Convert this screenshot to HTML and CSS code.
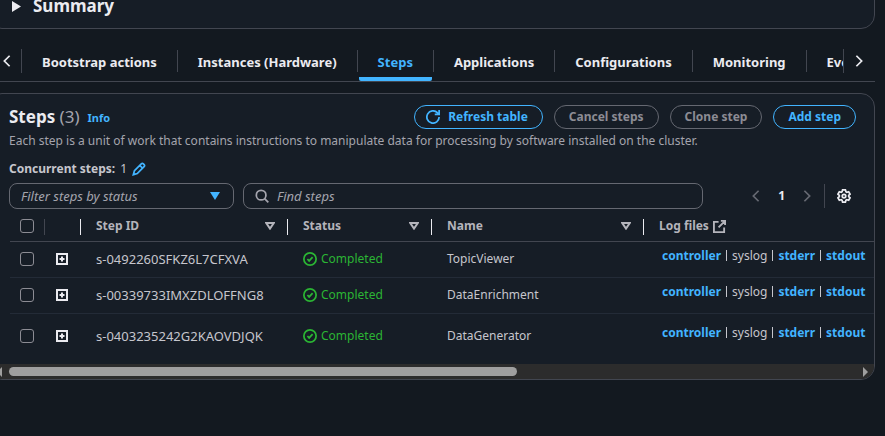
FILE: index.html
```html
<!DOCTYPE html>
<html lang="en">
<head>
<meta charset="utf-8">
<title>Cluster steps</title>
<link rel="stylesheet" href="styles.css">
</head>
<body>
<svg class="defs" width="0" height="0" aria-hidden="true">
  <symbol id="i-left" viewBox="0 0 16 16"><path d="M11 2 5 8l6 6"/></symbol>
  <symbol id="i-right" viewBox="0 0 16 16"><path d="M5 2l6 6-6 6"/></symbol>
  <symbol id="i-refresh" viewBox="0 0 16 16"><path d="M15 8a7 7 0 1 1-2-4.9L14.5 5M10 5h5V0"/></symbol>
  <symbol id="i-edit" viewBox="0 0 16 16"><path d="M1.5 14.5 2.8 10 10.6 2.2q1.2-1.2 2.4 0l.8.8q1.2 1.2 0 2.4L6 13.2zM9 4l3 3"/></symbol>
  <symbol id="i-search" viewBox="0 0 16 16"><circle cx="7" cy="7" r="5.500"/><path d="m11 11 4.200 4.200"/></symbol>
  <symbol id="i-gear" viewBox="0 0 16 16"><path d="M6.4 1h3.2l.6 2.1 1 .6 2.1-.6 1.6 2.8L13.400 7.400v1.200l1.500 1.500-1.600 2.800-2.100-.6-1 .6-.6 2.100H6.400l-.6-2.100-1-.6-2.100.6-1.600-2.800 1.500-1.500V7.400L1.100 5.900l1.600-2.800 2.100.6 1-.6z"/><circle cx="8" cy="8" r="2"/></symbol>
  <symbol id="i-expand" viewBox="0 0 12 12"><path d="M1 1h10v10H1zM6 3.500v5M3.500 6h5"/></symbol>
  <symbol id="i-ok" viewBox="0 0 16 16"><circle cx="8" cy="8" r="7"/><path d="m5 8 2 2.200L11 5.800"/></symbol>
  <symbol id="i-external" viewBox="0 0 14 14"><path d="M6 2H1v11h11V8M8.500 1H13v4.500M13 1 6 8"/></symbol>
  <symbol id="i-sort" viewBox="0 0 10 8"><path d="M1.200 1h7.600L5 6.600z"/></symbol>
</svg>

<main class="page">
  <details class="card summary">
    <summary><svg class="caret" viewBox="0 0 9 11"><path d="M0 0 9 5.500 0 11z"/></svg>Summary</summary>
  </details>

  <nav class="tabs" aria-label="Cluster details">
    <button class="tabs-arrow prev" aria-label="Scroll left"><svg class="icon chevron"><use href="#i-left"/></svg></button>
    <div class="tabs-list">
      <a class="tab" href="#bootstrap"><span>Bootstrap actions</span></a>
      <a class="tab" href="#instances"><span>Instances (Hardware)</span></a>
      <a class="tab active" href="#steps" aria-current="page"><span>Steps</span></a>
      <a class="tab" href="#applications"><span>Applications</span></a>
      <a class="tab" href="#configurations"><span>Configurations</span></a>
      <a class="tab" href="#monitoring"><span>Monitoring</span></a>
      <a class="tab" href="#events"><span>Events</span></a>
    </div>
    <button class="tabs-arrow next" aria-label="Scroll right"><svg class="icon chevron"><use href="#i-right"/></svg></button>
  </nav>

  <section class="card steps" id="steps">
    <header class="head">
      <h2>Steps <span class="count">(3)</span></h2>
      <a class="info" href="#info">Info</a>
      <div class="actions">
        <button class="btn"><svg class="icon refresh"><use href="#i-refresh"/></svg>Refresh table</button>
        <button class="btn" disabled>Cancel steps</button>
        <button class="btn" disabled>Clone step</button>
        <button class="btn">Add step</button>
      </div>
    </header>
    <p class="desc">Each step is a unit of work that contains instructions to manipulate data for processing by software installed on the cluster.</p>
    <p class="concurrent"><b>Concurrent steps:</b> 1 <button class="bare edit" aria-label="Edit concurrent steps"><svg class="icon"><use href="#i-edit"/></svg></button></p>

    <div class="filters">
      <div class="field status-filter">
        <select aria-label="Filter steps by status"><option>Filter steps by status</option></select>
        <svg class="drop" viewBox="0 0 10 8"><path d="M0 0h10L5 8z"/></svg>
      </div>
      <label class="field search"><svg class="icon"><use href="#i-search"/></svg><input type="search" placeholder="Find steps" aria-label="Find steps"></label>
      <div class="pager">
        <button class="bare" aria-label="Previous page" disabled><svg class="icon chevron"><use href="#i-left"/></svg></button>
        <b>1</b>
        <button class="bare" aria-label="Next page" disabled><svg class="icon chevron"><use href="#i-right"/></svg></button>
      </div>
      <button class="bare settings" aria-label="Preferences"><svg class="icon"><use href="#i-gear"/></svg></button>
    </div>

    <table>
      <colgroup><col class="c-check"><col class="c-expand"><col class="c-id"><col class="c-status"><col class="c-name"><col></colgroup>
      <thead>
        <tr>
          <th class="dim"><input type="checkbox" aria-label="Select all steps"></th>
          <th></th>
          <th><div class="th">Step ID<svg class="sort"><use href="#i-sort"/></svg></div></th>
          <th><div class="th">Status<svg class="sort"><use href="#i-sort"/></svg></div></th>
          <th><div class="th">Name<svg class="sort"><use href="#i-sort"/></svg></div></th>
          <th><div class="th logs">Log files<svg class="external"><use href="#i-external"/></svg></div></th>
        </tr>
      </thead>
      <tbody>
        <tr>
          <td><input type="checkbox" aria-label="Select TopicViewer"></td>
          <td><button class="bare" aria-label="Expand TopicViewer"><svg class="expand"><use href="#i-expand"/></svg></button></td>
          <td class="id">s-0492260SFKZ6L7CFXVA</td>
          <td><span class="ok"><svg class="icon"><use href="#i-ok"/></svg>Completed</span></td>
          <td>TopicViewer</td>
          <td><div class="links"><a href="#controller">controller</a><span>syslog</span><a href="#stderr">stderr</a><a href="#stdout">stdout</a></div></td>
        </tr>
        <tr>
          <td><input type="checkbox" aria-label="Select DataEnrichment"></td>
          <td><button class="bare" aria-label="Expand DataEnrichment"><svg class="expand"><use href="#i-expand"/></svg></button></td>
          <td class="id">s-00339733IMXZDLOFFNG8</td>
          <td><span class="ok"><svg class="icon"><use href="#i-ok"/></svg>Completed</span></td>
          <td>DataEnrichment</td>
          <td><div class="links"><a href="#controller">controller</a><span>syslog</span><a href="#stderr">stderr</a><a href="#stdout">stdout</a></div></td>
        </tr>
        <tr>
          <td><input type="checkbox" aria-label="Select DataGenerator"></td>
          <td><button class="bare" aria-label="Expand DataGenerator"><svg class="expand"><use href="#i-expand"/></svg></button></td>
          <td class="id">s-0403235242G2KAOVDJQK</td>
          <td><span class="ok"><svg class="icon"><use href="#i-ok"/></svg>Completed</span></td>
          <td>DataGenerator</td>
          <td><div class="links"><a href="#controller">controller</a><span>syslog</span><a href="#stderr">stderr</a><a href="#stdout">stdout</a></div></td>
        </tr>
      </tbody>
    </table>
    <div class="scrollbar">
      <svg class="bar-arrow" viewBox="0 0 5 10"><path d="M5 0v10L0 5z"/></svg>
      <div class="track"><div class="thumb"></div></div>
      <svg class="bar-arrow" viewBox="0 0 5 10"><path d="M0 0v10l5-5z"/></svg>
    </div>
  </section>
</main>
</body>
</html>
```
FILE: styles.css
```css
* { box-sizing: border-box; }

:root {
  --page: #131920;
  --card: #161d26;
  --line: #424650;
  --field: #656871;
  --text: #c6c6cd;
  --bright: #ebebf0;
  --muted: #a4a4ad;
  --link: #42b4ff;
}

body {
  margin: 0;
  overflow: hidden;
  background: var(--page);
  color: var(--text);
  font: 12px/18px "Noto Sans", sans-serif;
}

h2, p { margin: 0; }
a { color: var(--link); font-weight: 700; text-decoration: none; }
button, input, select { font: inherit; color: inherit; }
svg { display: block; flex: none; fill: none; stroke: currentColor; }

.defs { position: absolute; }
.icon { width: 14px; height: 14px; stroke-width: 2; }
.chevron { width: 14px; height: 14px; }
.page { margin: 0 10px 0 -12px; }

.card {
  background: var(--card);
  border: 1px solid var(--line);
  border-radius: 14px;
}

.summary { margin-top: -22px; padding: 15px 23px 10px; }
.summary summary {
  display: flex;
  align-items: center;
  gap: 12px;
  list-style: none;
  color: var(--bright);
  font-size: 17px;
  line-height: 24px;
  font-weight: 700;
}
.caret { width: 9px; height: 11px; fill: currentColor; stroke: none; }

.tabs {
  display: flex;
  margin-top: 12px;
  padding-left: 12px;
  border-bottom: 1px solid var(--line);
  color: var(--bright);
}
.tabs-arrow {
  flex: none;
  height: 24px;
  margin: 8px 0;
  padding: 0;
  border: 0 solid var(--line);
  background: none;
}
.prev { width: 22px; border-right-width: 1px; }
.next { width: 32px; padding-left: 8px; border-left-width: 1px; }
.tabs-list { display: flex; flex: 1; min-width: 0; overflow: hidden; }
.tab {
  display: flex;
  flex: none;
  align-items: center;
  color: inherit;
  font-size: 13px;
  line-height: 22px;
}
.tab span { margin: 0 1px; padding: 9px 19px 4px; border-bottom: 4px solid transparent; border-radius: 2px; }
.tab + .tab::before { content: ""; height: 22px; border-left: 1px solid var(--line); }
.tab.active { color: var(--link); }
.tab.active span { background: linear-gradient(var(--link), var(--link)) bottom / 100% 4px no-repeat border-box; }

.steps { margin-top: 11px; overflow: hidden; }
.head, .desc, .concurrent, .filters { margin-left: 20px; }
.head { display: flex; align-items: center; margin-top: 11px; margin-right: 18px; }
h2 { color: var(--bright); font-size: 17px; line-height: 24px; }
.count { color: var(--muted); font-weight: 400; }
.info { margin: 2px 0 0 8px; font-size: 11px; }
.actions { display: flex; gap: 11px; margin-left: auto; }
.btn {
  display: flex;
  align-items: center;
  gap: 8px;
  height: 24px;
  padding: 0 14px;
  border: 1px solid var(--link);
  border-radius: 12px;
  background: none;
  color: var(--link);
  font-weight: 700;
}
.btn:disabled { border-color: var(--field); color: #8c8c94; }
.refresh { margin-left: -3px; }
.desc { margin-top: 3px; color: var(--muted); }
.concurrent { display: flex; align-items: center; gap: 5px; margin-top: 10px; }

.bare { display: block; padding: 0; border: 0; background: none; }
.edit { color: var(--link); }
.bare:disabled { color: var(--field); }

.filters { display: flex; align-items: center; margin-top: 5px; margin-right: 23px; }
.field {
  display: flex;
  align-items: center;
  height: 26px;
  border: 1px solid var(--field);
  border-radius: 8px;
  color: var(--muted);
  font-size: 13px;
  font-style: italic;
}
.status-filter { flex: 0 0 225px; padding-right: 13px; }
.status-filter select {
  flex: 1;
  padding: 0 0 0 11px;
  border: 0;
  outline: 0;
  appearance: none;
  background: none;
}
.drop { width: 10px; height: 8px; fill: var(--link); stroke: none; }
.search { flex: 0 1 460px; gap: 8px; margin-left: 9px; padding-left: 11px; }
.search input { flex: 1; min-width: 0; padding: 0; border: 0; outline: 0; background: none; }
.search input::placeholder { color: inherit; opacity: 1; }
.pager { display: flex; align-items: center; gap: 15px; margin-left: auto; color: var(--bright); }
.settings { margin-left: 10px; padding: 5px 0 5px 12px; border-left: 1px solid var(--line); color: var(--bright); }

table {
  width: calc(100% - 21px);
  margin-left: 21px;
  border-collapse: separate;
  border-spacing: 0;
  table-layout: fixed;
}
.c-check { width: 35px; }
.c-expand { width: 36px; }
.c-id { width: 207px; }
.c-status { width: 144px; }
.c-name { width: 212px; }
th {
  height: 33px;
  padding: 2px 0 0;
  border-bottom: 1px solid var(--line);
  background: linear-gradient(var(--bright), var(--bright)) right 10px / 1px 16px no-repeat;
  color: #b4b4bb;
  text-align: left;
}
th.dim { background-image: linear-gradient(var(--line), var(--line)); }
th:last-child { background: none; }
.th { display: flex; align-items: center; justify-content: space-between; padding: 0 13px 0 15px; }
.logs { justify-content: flex-start; gap: 4px; }
.sort { width: 10px; height: 8px; stroke-width: 2; }
.external { width: 13px; height: 13px; stroke-width: 2; }
td { height: 36px; padding: 0 0 2px 15px; border-bottom: 1px solid #232b37; white-space: nowrap; }
th:first-child, td:first-child { padding-left: 10px; }
td:nth-child(2) { padding-left: 11px; color: var(--bright); }
tr:last-child td { height: 50px; padding-bottom: 6px; border-bottom: 0; }
.id { font-size: 13px; }
input[type="checkbox"] {
  display: block;
  width: 14px;
  height: 14px;
  margin: 0;
  border: 1px solid #8c8c94;
  border-radius: 3px;
  appearance: none;
}
.expand { width: 12px; height: 12px; stroke-width: 2; }
.ok { display: flex; align-items: center; gap: 4px; color: #2bb534; }
.links { display: flex; align-items: center; padding: 0 0 6px 3px; }
.links > * + *::before {
  content: "";
  display: inline-block;
  height: 11px;
  margin: 0 5px;
  border-left: 1px solid var(--text);
  vertical-align: -1px;
}

.scrollbar {
  display: flex;
  align-items: center;
  gap: 7px;
  height: 15px;
  padding: 0 6px 0 8px;
  background: #2c2c2c;
}
.bar-arrow { width: 5px; height: 10px; fill: #9f9f9f; stroke: none; }
.track { flex: 1; }
.thumb { width: 60%; height: 9px; border-radius: 5px; background: #9f9f9f; }
```
